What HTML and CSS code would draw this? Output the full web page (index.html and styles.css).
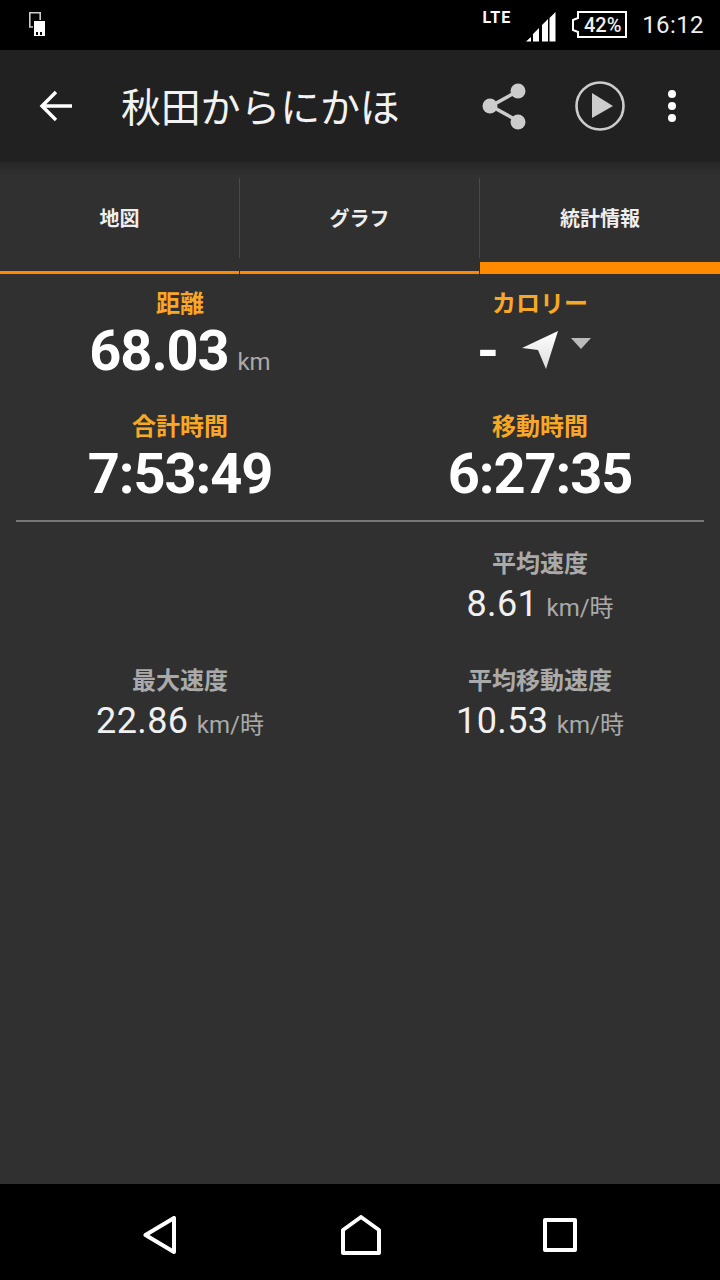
FILE: index.html
```html
<!DOCTYPE html>
<html lang="ja">
<head>
    <meta charset="utf-8">
    <title>秋田からにかほ</title>
    <link rel="stylesheet" href="styles.css">
</head>
<body>
    <div class="status-bar">
        <svg class="status-sim" width="22" height="26" viewBox="0 0 22 26">
            <path d="M9 15H5.8V.8H16.2V8" fill="none" stroke="#ccc" stroke-width="1.6"/>
            <path d="M10 9H21V24H10Z" fill="#fff"/>
            <path d="M12 20H14V23H12ZM16 20H18V23H16Z" fill="#000"/>
        </svg>
        <span class="status-lte">LTE</span>
        <svg class="status-signal" width="30" height="30" viewBox="0 0 30 30">
            <path d="M0 29.5L5 25V29.5ZM7 29.5V22L13 16V29.5ZM16 29.5V13L22 7V29.5ZM23.5 29.5V6L29.5 0V29.5Z" fill="#fff"/>
        </svg>
        <div class="battery">
            <svg class="battery-shell" width="55" height="27" viewBox="0 0 55 27">
                <path d="M6 1H54V26H6V21L1 19V9L6 7Z" fill="none" stroke="#fff" stroke-width="2"/>
            </svg>
            <span class="battery-text">42%</span>
        </div>
        <span class="status-time">16:12</span>
    </div>

    <div class="app-bar">
        <svg class="back-icon" width="34" height="32" viewBox="0 0 34 32">
            <path d="M33 16H4M17 2L3 16L17 30" fill="none" stroke="#fff" stroke-width="3.4"/>
        </svg>
        <h1 class="app-title">秋田からにかほ</h1>
        <svg class="share-icon" width="46" height="48" viewBox="0 0 46 48">
            <path d="M36 9L9 24L36 39" fill="none" stroke="#ccc" stroke-width="3.6"/>
            <circle cx="36" cy="9" r="7.5" fill="#ccc"/>
            <circle cx="8" cy="24" r="7.5" fill="#ccc"/>
            <circle cx="36" cy="40" r="7.5" fill="#ccc"/>
        </svg>
        <svg class="play-icon" width="50" height="50" viewBox="0 0 50 50">
            <circle cx="25" cy="25" r="23.5" fill="none" stroke="#ccc" stroke-width="2.6"/>
            <path d="M17 12L38 25L17 37Z" fill="#ccc"/>
        </svg>
        <div class="more-icon"><i></i><i></i><i></i></div>
    </div>

    <div class="tabs">
        <div class="tab">地図</div>
        <div class="tab">グラフ</div>
        <div class="tab tab-active">統計情報</div>
    </div>

    <div class="stats stats-main">
        <div class="stat">
            <div class="stat-label">距離</div>
            <div class="stat-value">68.03 <span class="stat-unit">km</span></div>
        </div>
        <div class="stat">
            <div class="stat-label">カロリー</div>
            <div class="stat-value stat-calorie">
                <span class="calorie-dash">-</span>
                <svg class="calorie-arrow" width="38" height="40" viewBox="0 0 38 40">
                    <defs>
                        <linearGradient id="arrowFill" x1="0" y1="0" x2="0" y2="1">
                            <stop offset="0" stop-color="#fff"/>
                            <stop offset="1" stop-color="#ddd"/>
                        </linearGradient>
                    </defs>
                    <path d="M37 1L25 39L17 20L1 18Z" fill="url(#arrowFill)"/>
                </svg>
                <span class="calorie-caret"></span>
            </div>
        </div>
        <div class="stat">
            <div class="stat-label">合計時間</div>
            <div class="stat-value">7:53:49</div>
        </div>
        <div class="stat">
            <div class="stat-label">移動時間</div>
            <div class="stat-value">6:27:35</div>
        </div>
    </div>

    <hr class="stats-rule">

    <div class="stats stats-sub">
        <div class="stat"></div>
        <div class="stat">
            <div class="stat-label">平均速度</div>
            <div class="stat-value">8.61 <span class="stat-unit">km/時</span></div>
        </div>
        <div class="stat">
            <div class="stat-label">最大速度</div>
            <div class="stat-value">22.86 <span class="stat-unit">km/時</span></div>
        </div>
        <div class="stat">
            <div class="stat-label">平均移動速度</div>
            <div class="stat-value">10.53 <span class="stat-unit">km/時</span></div>
        </div>
    </div>

    <div class="nav-bar">
        <svg width="36" height="38" viewBox="0 0 36 38">
            <path d="M2.5 19L31 2V36Z" fill="none" stroke="#fff" stroke-width="4" stroke-linejoin="round"/>
        </svg>
        <svg width="40" height="40" viewBox="0 0 40 40">
            <path d="M2 38V15L20 2L38 15V38Z" fill="none" stroke="#fff" stroke-width="4" stroke-linejoin="round"/>
        </svg>
        <svg width="34" height="34" viewBox="0 0 34 34">
            <rect x="2" y="2" width="30" height="30" fill="none" stroke="#fff" stroke-width="4" stroke-linejoin="round"/>
        </svg>
    </div>
</body>
</html>
```

FILE: styles.css
```css
* {
    box-sizing: border-box;
}
html,
body {
    height: 100%;
}
body {
    display: flex;
    flex-direction: column;
    margin: 0;
    background: #303030;
    color: #fff;
    font-family: Roboto, "Noto Sans CJK JP", sans-serif;
    overflow: hidden;
}

/* status bar */
.status-bar {
    display: flex;
    flex: none;
    align-items: center;
    height: 50px;
    padding: 0 16px 0 24px;
    background: #000;
}
.status-lte {
    margin-left: auto;
    margin-top: -16px;
    font-size: 16px;
    font-weight: 700;
    letter-spacing: 1px;
}
.status-signal {
    margin: 4px 0 0 15px;
}
.battery {
    display: flex;
    align-items: center;
    justify-content: center;
    position: relative;
    width: 55px;
    height: 27px;
    margin: -1px 15px 0 16px;
    padding-left: 6px;
}
.battery-shell {
    position: absolute;
    left: 0;
    top: 0;
}
.battery-text {
    font-size: 20px;
    font-weight: 500;
    color: #eee;
}
.status-time {
    font-size: 24px;
    letter-spacing: 0.4px;
    color: #eee;
}

/* app bar */
.app-bar {
    display: flex;
    flex: none;
    align-items: center;
    height: 112px;
    background: #212121;
}
.back-icon {
    margin-left: 39px;
}
.app-title {
    margin: -3px 0 0 48px;
    font-size: 40px;
    font-weight: 400;
    letter-spacing: -0.2px;
    color: #f2f2f2;
    white-space: nowrap;
}
.share-icon {
    margin-left: auto;
}
.play-icon {
    margin-left: 47px;
}
.more-icon {
    display: flex;
    flex-direction: column;
    gap: 4px;
    margin: 0 44px 0 43px;
}
.more-icon i {
    width: 8px;
    height: 8px;
    border-radius: 50%;
    background: #fff;
}

/* tabs */
.tabs {
    display: grid;
    grid-template-columns: 239px 239px 240px;
    column-gap: 1px;
    flex: none;
    height: 112px;
    padding-top: 16px;
    background: linear-gradient(#272727, #303030 14px);
}
.tab {
    display: flex;
    position: relative;
    align-items: center;
    justify-content: center;
    height: 96px;
    padding-bottom: 14px;
    border-bottom: 3px solid #ff8a00;
    font-size: 20px;
    font-weight: 700;
    color: #eee;
}
.tab + .tab::before {
    content: "";
    position: absolute;
    left: -1px;
    top: 0;
    height: 80px;
    width: 1px;
    background: #4a4a4a;
}
.tab-active {
    border-bottom-width: 12px;
    padding-bottom: 5px;
}

/* stats */
.stats {
    display: grid;
    grid-template-columns: 1fr 1fr;
    flex: none;
}
.stats-main {
    row-gap: 28px;
    padding-top: 14px;
}
.stats-sub {
    row-gap: 37px;
    padding-top: 26px;
}
.stat {
    text-align: center;
}
.stat-label {
    height: 31px;
    font-size: 24px;
    font-weight: 700;
    line-height: 32px;
    color: #f9a825;
}
.stat-value {
    height: 64px;
    font-size: 56px;
    font-weight: 700;
    letter-spacing: -1.1px;
    word-spacing: -4px;
    line-height: 64px;
    white-space: nowrap;
}
.stat-unit {
    font-size: 24px;
    font-weight: 400;
    letter-spacing: 0;
    color: #aaa;
}
.stats-sub .stat-label {
    height: 32px;
    color: #aaa;
}
.stats-sub .stat-value {
    height: 48px;
    font-size: 36px;
    font-weight: 400;
    letter-spacing: 0.4px;
    word-spacing: -1px;
    line-height: 48px;
    color: #f0f0f0;
}
.stats-rule {
    flex: none;
    width: 688px;
    height: 2px;
    margin: 14px 16px 0;
    border: 0;
    background: #777;
}

/* calorie row */
.stat-calorie {
    display: flex;
    align-items: flex-start;
    justify-content: center;
}
.calorie-dash {
    width: 44px;
    margin-left: -4px;
    text-align: left;
}
.calorie-arrow {
    margin-top: 11px;
}
.calorie-caret {
    width: 0;
    height: 0;
    margin: 19px 8px 0 12px;
    border-top: 11px solid #bbb;
    border-left: 10px solid transparent;
    border-right: 10px solid transparent;
}

/* nav bar */
.nav-bar {
    display: flex;
    flex: none;
    align-items: center;
    justify-content: space-between;
    height: 96px;
    margin-top: auto;
    padding: 5px 143px 0;
    background: #000;
}
```
